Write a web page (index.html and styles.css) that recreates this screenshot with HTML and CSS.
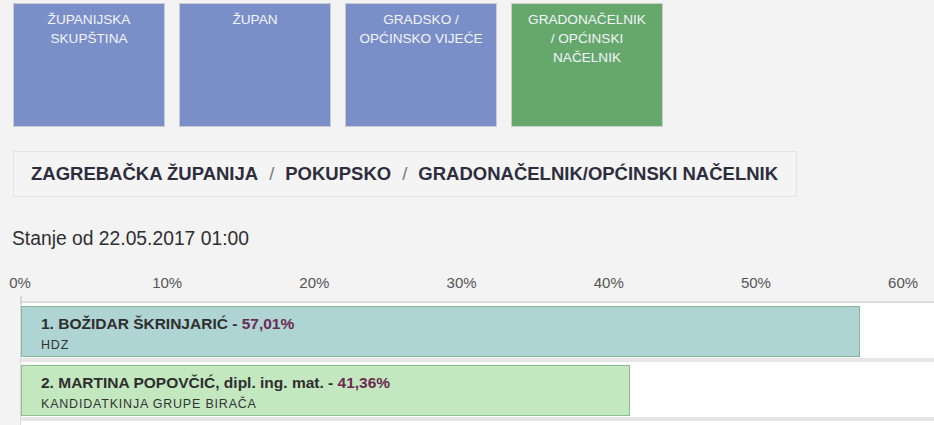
FILE: index.html
```html
<!DOCTYPE html>
<html lang="hr">
<head>
    <meta charset="UTF-8">
    <title>Izbori - Pokupsko</title>
    <link rel="stylesheet" href="styles.css">
</head>
<body>
    <div class="tiles">
        <div class="tile">ŽUPANIJSKA<br>SKUPŠTINA</div>
        <div class="tile">ŽUPAN</div>
        <div class="tile">GRADSKO /<br>OPĆINSKO VIJEĆE</div>
        <div class="tile active">GRADONAČELNIK<br>/ OPĆINSKI<br>NAČELNIK</div>
    </div>

    <div class="breadcrumb">
        <span class="crumb">ZAGREBAČKA ŽUPANIJA</span>
        <span class="sep">/</span>
        <span class="crumb">POKUPSKO</span>
        <span class="sep">/</span>
        <span class="crumb">GRADONAČELNIK/OPĆINSKI NAČELNIK</span>
    </div>

    <div class="status">Stanje od 22.05.2017 01:00</div>

    <div class="chart">
        <div class="axis">
            <div class="tick"><span>0%</span></div>
            <div class="tick"><span>10%</span></div>
            <div class="tick"><span>20%</span></div>
            <div class="tick"><span>30%</span></div>
            <div class="tick"><span>40%</span></div>
            <div class="tick"><span>50%</span></div>
            <div class="tick"><span>60%</span></div>
        </div>

        <div class="rows">
            <div class="row">
                <div class="bar hdz" style="--pct: 57.01">
                    <div class="name">1. BOŽIDAR ŠKRINJARIĆ - <span class="pct">57,01%</span></div>
                    <div class="party">HDZ</div>
                </div>
            </div>
            <div class="row">
                <div class="bar grupa" style="--pct: 41.36">
                    <div class="name">2. MARTINA POPOVČIĆ, dipl. ing. mat. - <span class="pct">41,36%</span></div>
                    <div class="party">KANDIDATKINJA GRUPE BIRAČA</div>
                </div>
            </div>
            <div class="row"></div>
        </div>
    </div>
</body>
</html>
```

FILE: styles.css
```css
body {
    font-family: Arial, "Liberation Sans", Helvetica, sans-serif;
    background-color: #f3f3f3;
    color: #333;
    margin: 0;
    padding: 3px 0 0 0;
    overflow: hidden;
    height: 425px;
}

/* Election type tiles */
.tiles {
    display: flex;
    gap: 14px;
    padding-left: 13px;
}

.tile {
    width: 150px;
    height: 116px;
    padding-top: 6px;
    background-color: #7a8ec8;
    border: 1px solid #c9ccd4;
    color: #f2f4fb;
    font-size: 13.6px;
    line-height: 19px;
    text-align: center;
    text-transform: uppercase;
}

.tile.active {
    background-color: #66a86b;
    border-color: #c8d0c8;
}

/* Breadcrumb */
.breadcrumb {
    margin: 24px 0 0 13px;
    width: 765px;
    height: 44px;
    padding-left: 17px;
    display: flex;
    align-items: center;
    border: 1px solid #e3e3e3;
    background-color: #f4f4f4;
    font-size: 18.5px;
    color: #2d2d3d;
}

.crumb {
    font-weight: bold;
}

.sep {
    color: #7a7a7a;
    margin: 0 11px 0 11px;
}

.status {
    margin: 31px 0 0 12px;
    font-size: 19.3px;
    line-height: 22px;
    color: #2f2f2f;
}

/* Chart */
.chart {
    margin-top: 24px;
    padding-left: 20px;
}

.axis {
    display: flex;
    height: 27px;
    border-bottom: 2px solid #dcdcdc;
    position: relative;
}

.axis::before {
    content: "";
    position: absolute;
    left: 0;
    bottom: -4px;
    width: 2px;
    height: 9px;
    background-color: #d6d6d6;
}

.tick {
    width: 147.2px;
    flex-shrink: 0;
    font-size: 15px;
    line-height: 17px;
    color: #555;
}

.tick span {
    display: inline-block;
    transform: translateX(-50%);
}

.rows {
    border-left: 1px solid #dadada;
}

.row {
    height: 51px;
    padding: 3px 0 1px 0;
    background-color: #fff;
    border-bottom: 4px solid #e6e6e6;
}

.bar {
    width: calc(var(--pct) * 14.72px);
    height: 51px;
    box-sizing: border-box;
    padding: 7px 0 0 19px;
    border: 1px solid #86b894;
}

.bar.hdz {
    background-color: #aed4d3;
}

.bar.grupa {
    background-color: #c3e8c0;
    border-color: #8bbf8c;
}

.name {
    font-size: 15.5px;
    font-weight: bold;
    line-height: 19px;
    color: #2e2e2e;
}

.pct {
    color: #6c2a52;
}

.party {
    margin-top: 5px;
    font-size: 12.5px;
    line-height: 14px;
    letter-spacing: 0.8px;
    color: #333;
}
```
